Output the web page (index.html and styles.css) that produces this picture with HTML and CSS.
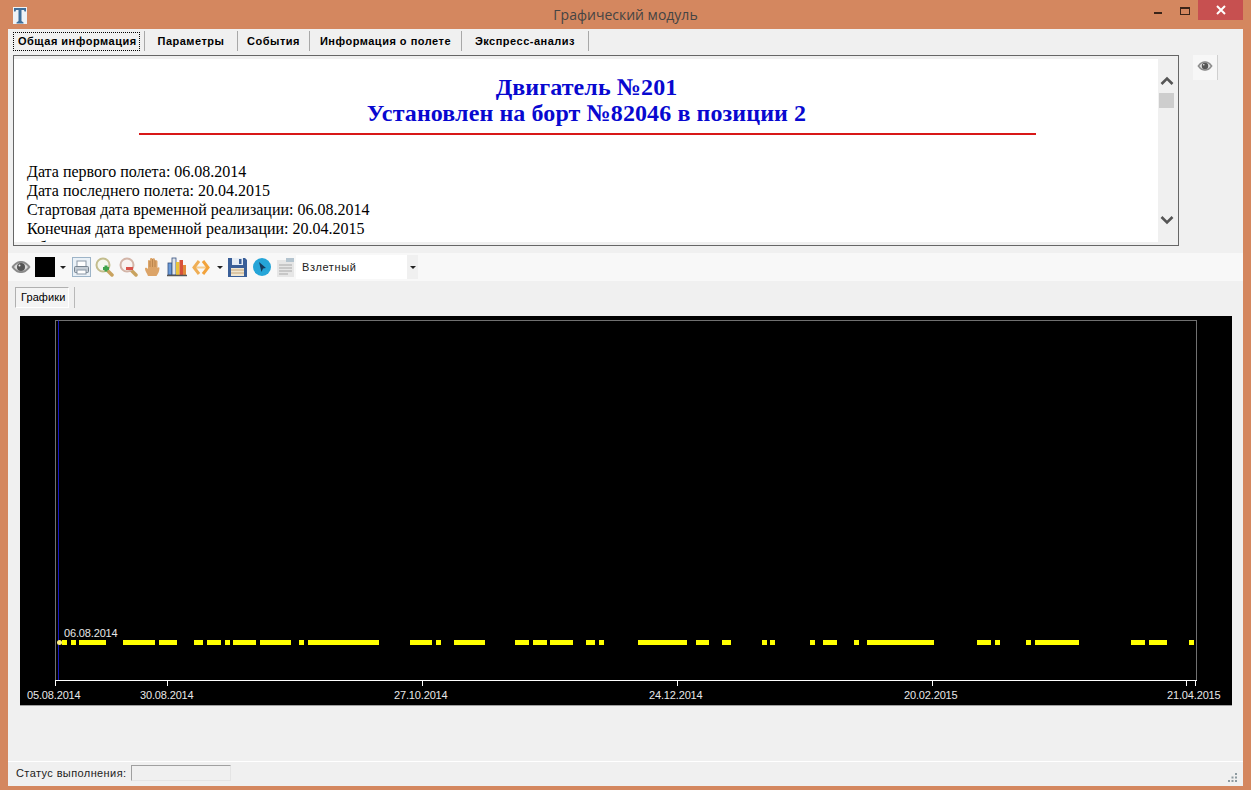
FILE: index.html
```html
<!DOCTYPE html>
<html lang="ru">
<head>
  <meta charset="UTF-8">
  <title>Графический модуль</title>
  <link rel="stylesheet" href="styles.css">
</head>
<body>
  <svg class="defs" width="0" height="0">
    <symbol id="eye" viewBox="0 0 20 14">
      <path d="M0.5 7C4 2 7 1 10 1s6 1 9.500 6c-3.500 5-6.500 6-9.500 6S4 12 0.500 7z" fill="#8b8b8b"/>
      <path d="M3 7c2-2.800 4-4 7-4s5 1.200 7 4c-2 2.800-4 4-7 4S5 9.800 3 7z" fill="#dcdcdc"/>
      <circle cx="10" cy="7" r="4" fill="#555"/>
      <circle cx="8.500" cy="5.500" r="1" fill="#eee"/>
    </symbol>
  </svg>

  <div class="window">
    <header class="titlebar">
      <div class="title-left">
        <svg class="app-icon" width="16" height="17" viewBox="0 0 16 17">
          <rect x="1" y="0" width="14" height="17" fill="#eef2f6"/>
          <path d="M2 1h12v3.500h-1.500L12 3H9.500v11l2 1.500v1h-7v-1l2-1.500V3H4l-.5 1.500H2z" fill="#3f6e99"/>
        </svg>
      </div>
      <div class="title-text">Графический модуль</div>
      <div class="title-buttons">
        <span class="btn-min"></span>
        <span class="btn-max"></span>
        <span class="btn-close">
          <svg width="10" height="10" viewBox="0 0 10 10"><path d="M1 1l8 8M9 1L1 9" stroke="#fff" stroke-width="2"/></svg>
        </span>
      </div>
    </header>

    <main class="client">
      <nav class="tabs">
        <div class="tab tab-active"><span>Общая информация</span></div>
        <div class="tab tab-params">Параметры</div>
        <div class="tab tab-events">События</div>
        <div class="tab tab-flight">Информация о полете</div>
        <div class="tab tab-express">Экспресс-анализ</div>
      </nav>

      <section class="info-row">
        <div class="info-panel">
          <div class="info-view">
            <h1>Двигатель №201<br>Установлен на борт №82046 в позиции 2</h1>
            <div class="red-rule"></div>
            <p>Дата первого полета: 06.08.2014</p>
            <p>Дата последнего полета: 20.04.2015</p>
            <p>Стартовая дата временной реализации: 06.08.2014</p>
            <p>Конечная дата временной реализации: 20.04.2015</p>
            <p>Общее количество полетов: 216</p>
          </div>
          <div class="scroll">
            <svg class="chev-up" width="14" height="10" viewBox="0 0 14 10"><path d="M1.500 8L7 2.500 12.500 8" fill="none" stroke="#555" stroke-width="2.600"/></svg>
            <div class="thumb"></div>
            <svg class="chev-down" width="14" height="10" viewBox="0 0 14 10"><path d="M1.500 2L7 7.500 12.500 2" fill="none" stroke="#555" stroke-width="2.600"/></svg>
          </div>
        </div>
        <div class="side-eye"><svg width="16" height="12"><use href="#eye"/></svg></div>
      </section>

      <div class="toolbar">
        <svg class="tool tool-eye" width="20" height="14"><use href="#eye"/></svg>
        <span class="color-box"></span>
        <span class="arrow arrow-color"></span>
        <span class="tool-print">
          <svg width="17" height="17" viewBox="0 0 17 17">
            <rect x="4" y="2" width="9" height="6" fill="#fff" stroke="#8a97a5"/>
            <rect x="1.500" y="7.500" width="14" height="6" rx="1" fill="#c4ccd4" stroke="#77838f"/>
            <rect x="4" y="11" width="9" height="4" fill="#fff" stroke="#8a97a5"/>
          </svg>
        </span>
        <svg class="tool tool-zoomin" width="19" height="20" viewBox="0 0 19 20">
          <path d="M12 13l5 5" stroke="#c9a35f" stroke-width="3.500" stroke-linecap="round"/>
          <circle cx="8" cy="8" r="6.500" fill="#f5f7ee" stroke="#c3bd8d" stroke-width="2"/>
          <path d="M8 11.500h6M11 8.500v6" stroke="#3fa34a" stroke-width="3"/>
        </svg>
        <svg class="tool tool-zoomout" width="19" height="20" viewBox="0 0 19 20">
          <path d="M12 13l5 5" stroke="#c9a35f" stroke-width="3.500" stroke-linecap="round"/>
          <circle cx="8" cy="8" r="6.500" fill="#f8f3f0" stroke="#d3b5a8" stroke-width="2"/>
          <path d="M7 11.500h7" stroke="#d9534a" stroke-width="3"/>
        </svg>
        <svg class="tool tool-hand" width="16" height="20" viewBox="0 0 16 20">
          <path d="M3 19c-1-3-3-5-3-7s2-1 3 0V4c0-1.500 2-1.500 2 0V2c0-1.500 2.500-1.500 2.500 0v0c0-1 2.500-1 2.500 .5V4c0-1.200 2.500-1.200 2.500 .5V11c.5-1 2-1 2 0 0 3-1.500 6-3 8z" fill="#dca468"/>
          <path d="M5 4v6M7.500 2v8M10 3v7" stroke="#b37f48" stroke-width=".8"/>
        </svg>
        <svg class="tool tool-bars" width="20" height="20" viewBox="0 0 20 20">
          <rect x="1" y="6" width="4" height="12" fill="#6a9ad8" stroke="#35507f" stroke-width=".8"/>
          <rect x="5" y="1" width="4" height="17" fill="#e0e4ea" stroke="#35507f" stroke-width=".8"/>
          <rect x="9" y="5" width="3.500" height="13" fill="#e8c23a"/>
          <rect x="12.500" y="3" width="3.500" height="15" fill="#d8503a"/>
          <rect x="16" y="8" width="3" height="10" fill="#e08a3a"/>
          <path d="M0 18.500h20" stroke="#555" stroke-width="1.500"/>
        </svg>
        <svg class="tool tool-arrows" width="18" height="17" viewBox="0 0 18 17">
          <path d="M3 8.500h12" stroke="#f6cd8e" stroke-width="2"/>
          <path d="M7 2L2 8.500 7 15" fill="none" stroke="#efae55" stroke-width="3"/>
          <path d="M11 2l5 6.500L11 15" fill="none" stroke="#f2a33c" stroke-width="3"/>
        </svg>
        <span class="arrow arrow-arrows"></span>
        <svg class="tool tool-save" width="19" height="20" viewBox="0 0 19 20">
          <path d="M0 1h17l2 2v17H0z" fill="#3a5f98"/>
          <rect x="4" y="1" width="11" height="7" fill="#e6edf5"/>
          <rect x="11" y="2" width="2.500" height="5" fill="#3a5f98"/>
          <rect x="3" y="11" width="13" height="8" fill="#f0e6d0"/>
          <path d="M3 13h13M3 16h13" stroke="#c9a87a"/>
        </svg>
        <svg class="tool tool-clock" width="18" height="18" viewBox="0 0 18 18">
          <circle cx="9" cy="9" r="9" fill="#25a5d8"/>
          <path d="M6 4l7 6-3 .5L8.500 14z" fill="#173a5c"/>
        </svg>
        <svg class="tool tool-doc" width="17" height="19" viewBox="0 0 17 19">
          <rect x="0" y="2" width="17" height="17" fill="#e6e6e6"/>
          <rect x="9" y="0" width="8" height="4" fill="#b4c4cf"/>
          <path d="M2 7h13M2 10h13M2 13h13M2 16h9" stroke="#bdbdbd" stroke-width="1.500"/>
        </svg>
        <div class="mode-select">
          <span class="mode-text">Взлетный</span>
          <span class="mode-btn"><span class="arrow"></span></span>
        </div>
      </div>

      <div class="graph-tabs">
        <div class="graph-tab">Графики</div>
        <div class="graph-sep"></div>
      </div>

      <div class="chart">
        <svg width="1212" height="389" viewBox="20 316 1212 389">
          <rect class="plot-frame" x="55.500" y="320.500" width="1141" height="360"/>
          <path d="M58.500 320.500V680" stroke="#1818c0"/>
          <path d="M55 680.500H1197" stroke="#fff"/>
          <path d="M55.500 680v6M167.500 680v6M422.500 680v6M677.500 680v6M932.500 680v6M1186.500 680v6M1195.500 680v6" stroke="#fff"/>
          <path class="flights" d="M62 642.500h5M71 642.500h5M79 642.500h27M123 642.500h32M159 642.500h18M194 642.500h9M207 642.500h14M225 642.500h5M233 642.500h23M260 642.500h31M299 642.500h5M308 642.500h71M410 642.500h22M436 642.500h5M454 642.500h31M515 642.500h14M533 642.500h14M550 642.500h23M586 642.500h9M599 642.500h5M638 642.500h49M696 642.500h13M722 642.500h9M762 642.500h5M770 642.500h5M810 642.500h5M823 642.500h14M854 642.500h5M867 642.500h67M977 642.500h14M995 642.500h5M1026 642.500h5M1035 642.500h44M1131 642.500h14M1149 642.500h18M1189 642.500h5"/>
          <circle cx="59.500" cy="642.500" r="2.500" fill="#ffef80"/>
          <text class="chart-label" x="64" y="637">06.08.2014</text>
          <text class="chart-label" x="27" y="699">05.08.2014</text>
          <text class="chart-label" x="140" y="699">30.08.2014</text>
          <text class="chart-label" x="394" y="699">27.10.2014</text>
          <text class="chart-label" x="649" y="699">24.12.2014</text>
          <text class="chart-label" x="904" y="699">20.02.2015</text>
          <text class="chart-label" x="1167" y="699">21.04.2015</text>
        </svg>
      </div>

      <footer class="statusbar">
        <span class="status-label">Статус выполнения:</span>
        <span class="status-progress"></span>
        <svg class="grip" width="11" height="11" viewBox="0 0 11 11">
          <path d="M8 1h2v2H8zM4.500 4.500h2v2h-2zM8 4.500h2v2H8zM1 8h2v2H1zM4.500 8h2v2h-2zM8 8h2v2H8z" fill="#8d9aa0"/>
        </svg>
      </footer>
    </main>
  </div>
</body>
</html>
```

FILE: styles.css
```css
html, body {
  margin: 0;
  height: 100%;
  overflow: hidden;
}
body {
  background: #d4875f;
  font-family: "Liberation Sans", Arial, sans-serif;
  color: #000;
}
.defs {
  display: block;
  height: 0;
}
.window {
  height: 790px;
  display: flex;
  flex-direction: column;
}

/* title bar */
.titlebar {
  height: 29px;
  flex: none;
  display: grid;
  grid-template-columns: 1fr auto 1fr;
}
.title-left {
  padding: 7px 0 0 12px;
}
.title-text {
  font-family: "Open Sans", sans-serif;
  font-size: 14px;
  line-height: 30px;
  color: #444;
}
.title-buttons {
  display: flex;
  justify-content: flex-end;
  align-items: flex-start;
  padding-right: 8px;
}
.btn-min {
  width: 8px;
  height: 2px;
  margin: 12px 18px 0 0;
  background: #3a2418;
}
.btn-max {
  width: 8px;
  height: 5px;
  margin: 7px 8px 0 0;
  border: 1px solid #3a2418;
  border-top-width: 2px;
}
.btn-close {
  width: 45px;
  height: 20px;
  background: #c75050;
  display: flex;
  align-items: center;
  justify-content: center;
}

/* client area */
.client {
  flex: 1;
  margin: 0 8px 4px 8px;
  background: #f0f0f0;
  display: flex;
  flex-direction: column;
  min-height: 0;
}
.tabs {
  height: 23px;
  flex: none;
  display: flex;
  font-size: 11px;
  font-weight: bold;
  letter-spacing: 0.5px;
  padding-left: 4px;
}
.tab {
  display: flex;
  align-items: center;
  justify-content: center;
  box-sizing: border-box;
  height: 20px;
  margin-top: 2px;
  border-right: 1px solid #a8a8a8;
  white-space: nowrap;
}
.tab-active {
  width: 133px;
  justify-content: flex-start;
  padding-left: 1px;
}
.tab-active span {
  border: 1px dotted #000;
  padding: 2px 0 2px 4px;
  line-height: 13px;
  width: 121px;
}
.tab-params { width: 93px; }
.tab-events { width: 72px; }
.tab-flight { width: 152px; }
.tab-express { width: 127px; }

.info-row {
  height: 191px;
  flex: none;
  display: flex;
  margin-top: 3px;
  padding-left: 5px;
}
.info-panel {
  width: 1166px;
  box-sizing: border-box;
  border: 1px solid #666;
  padding: 3px 0 3px 0;
  display: flex;
}
.info-view {
  flex: 1;
  background: #fff;
  overflow: hidden;
  padding: 15px 0 0 13px;
  font-family: "Liberation Serif", "Times New Roman", serif;
  font-size: 16px;
  line-height: 19px;
}
.info-view h1 {
  margin: 0 0 0 -12px;
  font-size: 24px;
  line-height: 26px;
  font-weight: bold;
  letter-spacing: 0.1px;
  color: #0808d0;
  text-align: center;
}
.red-rule {
  width: 897px;
  height: 2px;
  background: #d81818;
  margin: 7px 0 27px 112px;
}
.info-view p {
  margin: 0;
  white-space: nowrap;
}
.scroll {
  width: 20px;
  flex: none;
  display: flex;
  flex-direction: column;
  align-items: center;
}
.chev-up {
  margin: 17px 0 7px -2px;
}
.thumb {
  width: 15px;
  height: 15px;
  margin: 0 0 0 -3px;
  background: #cdcdcd;
}
.chev-down {
  margin: 107px 0 0 -2px;
}
.side-eye {
  width: 25px;
  height: 25px;
  margin-left: 14px;
  background: #f7f7f7;
  border-right: 1px solid #cfcfcf;
  display: flex;
  justify-content: center;
  padding-top: 5px;
  box-sizing: border-box;
}

/* toolbar */
.toolbar {
  height: 28px;
  flex: none;
  margin-top: 7px;
  background: #f8f8f8;
  display: flex;
  align-items: center;
  padding-left: 3px;
}
.tool {
  flex: none;
}
.color-box {
  width: 20px;
  height: 20px;
  margin-left: 4px;
  background: #000;
}
.arrow {
  display: inline-block;
  width: 0;
  height: 0;
  border-left: 3px solid transparent;
  border-right: 3px solid transparent;
  border-top: 3px solid #222;
}
.arrow-color {
  margin: 0 6px 0 5px;
}
.tool-print {
  box-sizing: border-box;
  width: 19px;
  height: 20px;
  border: 1px solid #9db4c8;
  background: #eaf1f7;
  display: flex;
  align-items: center;
  justify-content: center;
}
.tool-zoomin { margin-left: 4px; }
.tool-zoomout { margin-left: 5px; }
.tool-hand { margin-left: 7px; }
.tool-bars { margin-left: 6px; }
.tool-arrows { margin-left: 5px; }
.arrow-arrows { margin: 0 5px 0 7px; }
.tool-save { margin-left: 0; }
.tool-clock { margin-left: 6px; }
.tool-doc { margin-left: 6px; }
.mode-select {
  width: 122px;
  height: 24px;
  margin-left: 2px;
  background: #fff;
  display: flex;
  align-items: center;
  justify-content: space-between;
  font-size: 11px;
  letter-spacing: 0.6px;
  color: #222;
}
.mode-text {
  padding-left: 6px;
}
.mode-btn {
  width: 11px;
  height: 24px;
  background: #f0f0f0;
  display: flex;
  align-items: center;
  justify-content: center;
}

/* graph tab */
.graph-tabs {
  height: 21px;
  flex: none;
  margin-top: 6px;
  padding-left: 7px;
  display: flex;
}
.graph-tab {
  width: 54px;
  box-sizing: border-box;
  border: 1px solid #b0b0b0;
  border-right-color: #fff;
  border-bottom-color: #fff;
  font-size: 11px;
  letter-spacing: 0.1px;
  line-height: 19px;
  padding-left: 5px;
  background: #f4f4f4;
}
.graph-sep {
  width: 1px;
  margin-left: 5px;
  background: #b8b8b8;
}

/* chart */
.chart {
  height: 389px;
  flex: none;
  margin: 8px 11px 0 12px;
  background: #000;
  border-bottom: 1px solid #a0a0a0;
}
.chart svg {
  display: block;
}
.plot-frame {
  fill: none;
  stroke: #e0e0e0;
  stroke-dasharray: 1 1;
}
.flights {
  stroke: #ffff00;
  stroke-width: 5;
  fill: none;
}
.chart-label {
  font-family: "Liberation Sans", Arial, sans-serif;
  font-size: 11px;
  letter-spacing: -0.15px;
  fill: #e8e8e8;
}

/* status bar */
.statusbar {
  height: 25px;
  flex: none;
  margin-top: auto;
  border-top: 1px solid #fff;
  box-sizing: border-box;
  display: flex;
  align-items: center;
  padding: 0 5px 2px 8px;
  font-size: 11px;
  letter-spacing: 0.4px;
  color: #222;
}
.status-progress {
  width: 100px;
  height: 16px;
  box-sizing: border-box;
  margin-left: 5px;
  border: 1px solid #e4e4e4;
  border-top-color: #a0a0a0;
  border-left-color: #a0a0a0;
}
.grip {
  margin-left: auto;
  margin-top: 8px;
}
```
